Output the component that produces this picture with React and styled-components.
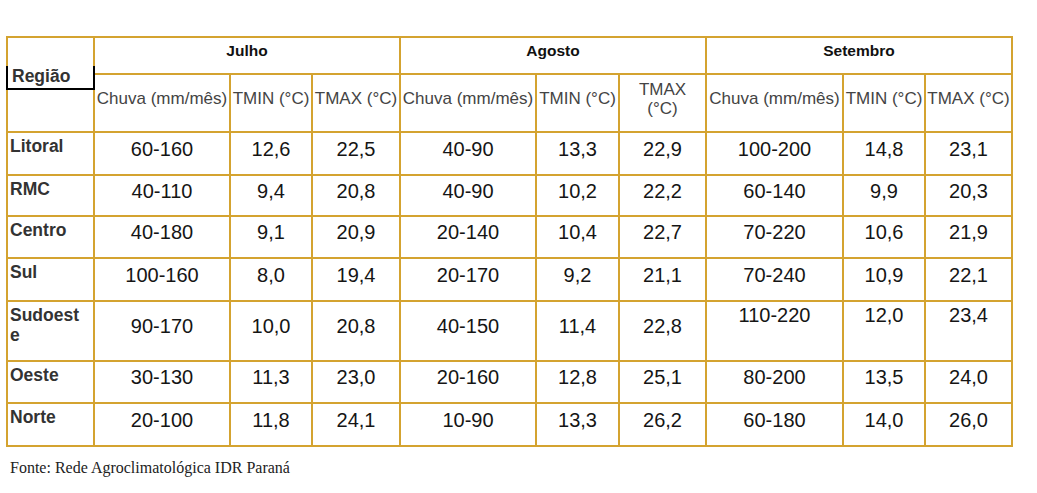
import React from "react";
import styled, { createGlobalStyle } from "styled-components";

const Global = createGlobalStyle`
  html, body { margin: 0; padding: 0; background: #ffffff; }
  body { font-family: "Liberation Sans", Arial, sans-serif; }
`;

const GOLD = "#D4A330";

const Sheet = styled.div`
  display: grid;
  grid-template-columns: 85px 134px 80px 86px 134px 81px 85px 135px 80px 85px;
  grid-template-rows: 35px 56px 41px 39px 40px 41px 58px 40px 41px;
  gap: 2px;
  padding: 2px;
  background: ${GOLD};
  width: max-content;
  margin: 36px 0 0 6px;
`;

const Cell = styled.div`
  background: #ffffff;
  min-width: 0;
`;

const RegionCell = styled(Cell)`
  grid-row: span 2;
  display: flex;
  flex-direction: column;
  padding-top: 28px;
`;

const RegionLabel = styled.div`
  margin: 0 -2px;
  border: 2px solid #000;
  border-top: none;
  height: 22px;
  padding-left: 4px;
  font-weight: 700;
  font-size: 17.5px;
  line-height: 20px;
  color: #333;
`;

const MonthCell = styled(Cell)`
  grid-column: span 3;
  text-align: center;
  padding-top: 4px;
  font-weight: 700;
  font-size: 15.5px;
  line-height: 18px;
  color: #111;
`;

const SubHead = styled(Cell)`
  display: flex;
  align-items: center;
  justify-content: center;
  text-align: center;
  padding-bottom: 8px;
  font-size: 17px;
  line-height: 19.5px;
  color: #444;
  white-space: nowrap;
`;

const RowLabel = styled(Cell)`
  padding: 4px 0 0 2px;
  font-weight: 700;
  font-size: 17.5px;
  line-height: 19.5px;
  color: #333;
`;

const DataCell = styled(Cell)`
  display: flex;
  justify-content: center;
  align-items: ${(p) => (p.$top ? "flex-start" : "center")};
  padding: ${(p) => (p.$top ? "2px 0 0 0" : "0 0 9px 0")};
  font-size: 20px;
  line-height: 23px;
  color: #151515;
`;

const Source = styled.p`
  margin: 12px 0 0 10px;
  font-family: "Liberation Serif", "Times New Roman", serif;
  font-size: 16px;
  color: #222;
`;

const months = ["Julho", "Agosto", "Setembro"];

const rows = [
  { name: "Litoral", v: ["60-160", "12,6", "22,5", "40-90", "13,3", "22,9", "100-200", "14,8", "23,1"] },
  { name: "RMC", v: ["40-110", "9,4", "20,8", "40-90", "10,2", "22,2", "60-140", "9,9", "20,3"] },
  { name: "Centro", v: ["40-180", "9,1", "20,9", "20-140", "10,4", "22,7", "70-220", "10,6", "21,9"] },
  { name: "Sul", v: ["100-160", "8,0", "19,4", "20-170", "9,2", "21,1", "70-240", "10,9", "22,1"] },
  { name: ["Sudoest", "e"], v: ["90-170", "10,0", "20,8", "40-150", "11,4", "22,8", "110-220", "12,0", "23,4"], topLast: true },
  { name: "Oeste", v: ["30-130", "11,3", "23,0", "20-160", "12,8", "25,1", "80-200", "13,5", "24,0"] },
  { name: "Norte", v: ["20-100", "11,8", "24,1", "10-90", "13,3", "26,2", "60-180", "14,0", "26,0"] },
];

export default function App() {
  return (
    <>
      <Global />
      <Sheet>
        <RegionCell>
          <RegionLabel>Região</RegionLabel>
        </RegionCell>
        {months.map((m) => (
          <MonthCell key={m}>{m}</MonthCell>
        ))}
        {months.map((m, i) => (
          <React.Fragment key={"h" + m}>
            <SubHead>Chuva (mm/mês)</SubHead>
            <SubHead>TMIN (°C)</SubHead>
            <SubHead>
              {i === 1 ? (
                <span>
                  TMAX
                  <br />
                  (°C)
                </span>
              ) : (
                "TMAX (°C)"
              )}
            </SubHead>
          </React.Fragment>
        ))}
        {rows.map((r, ri) => (
          <React.Fragment key={ri}>
            <RowLabel>
              {Array.isArray(r.name) ? (
                <>
                  {r.name[0]}
                  <br />
                  {r.name[1]}
                </>
              ) : (
                r.name
              )}
            </RowLabel>
            {r.v.map((val, ci) => (
              <DataCell key={ci} $top={r.topLast && ci >= 6}>
                {val}
              </DataCell>
            ))}
          </React.Fragment>
        ))}
      </Sheet>
      <Source>Fonte: Rede Agroclimatológica IDR Paraná</Source>
    </>
  );
}
